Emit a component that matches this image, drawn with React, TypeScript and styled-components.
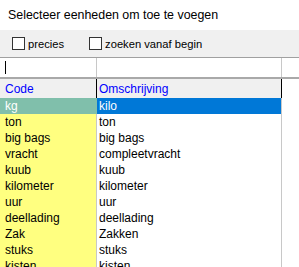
import React from 'react';
import styled, {createGlobalStyle} from "styled-components";

const GlobalStyle = createGlobalStyle`
  body {
    margin: 0;
    background: #ffffff;
    font-family: "Liberation Sans", Arial, sans-serif;
  }
`

const Page = styled.div`
  width: 299px;
  height: 267px;
  overflow: hidden;
`

const Title = styled.div`
  height: 30px;
  padding-left: 8px;
  font-size: 12.4px;
  line-height: 30px;
  color: #000;
`

const Toolbar = styled.div`
  height: 27px;
  background: #f0f0f0;
  border-bottom: 1px solid #a0a0a0;
  display: flex;
  align-items: center;
  padding-left: 12px;
  gap: 25px;
`

const Check = styled.label`
  display: flex;
  align-items: center;
  gap: 3px;
  font-size: 11.2px;
  color: #000;
`

const Box = styled.span`
  width: 11px;
  height: 11px;
  border: 1px solid #333;
  background: #fff;
`

const Grid = styled.div`
  display: grid;
  grid-template-columns: 96px 1px 184px 1px 1fr;
`

const FilterRow = styled(Grid)`
  height: 19px;
  border-bottom: 2px solid #a9a9a9;
`

const Line = styled.div<{$color: string}>`
  background: ${p => p.$color};
`

const FilterCell = styled.div`
  position: relative;
`

const Caret = styled.span`
  position: absolute;
  left: 5px;
  top: 3px;
  width: 1px;
  height: 13px;
  background: #000;
`

const HeaderRow = styled(Grid)`
  height: 19px;
`

const HeadCell = styled.div<{$pad: number}>`
  background: #f0f0f0;
  color: #0000ff;
  font-size: 12px;
  line-height: 20px;
  padding-left: ${p => p.$pad}px;
`

const Row = styled(Grid)`
  height: 16px;
  font-size: 12px;
  line-height: 16px;
`

const CodeCell = styled.div<{$selected?: boolean}>`
  background: ${p => p.$selected ? "#80bfab" : "#ffff80"};
  color: ${p => p.$selected ? "#fff" : "#000"};
  padding-left: 5px;
  white-space: nowrap;
`

const DescCell = styled.div<{$selected?: boolean}>`
  background: ${p => p.$selected ? "#0078d7" : "#fff"};
  color: ${p => p.$selected ? "#fff" : "#000"};
  padding-left: 2px;
  white-space: nowrap;
`

const units: [string, string][] = [
    ["kg", "kilo"],
    ["ton", "ton"],
    ["big bags", "big bags"],
    ["vracht", "compleetvracht"],
    ["kuub", "kuub"],
    ["kilometer", "kilometer"],
    ["uur", "uur"],
    ["deellading", "deellading"],
    ["Zak", "Zakken"],
    ["stuks", "stuks"],
    ["kisten", "kisten"],
]

export default function App() {
    return (
        <>
            <GlobalStyle/>
            <Page>
                <Title>Selecteer eenheden om toe te voegen</Title>
                <Toolbar>
                    <Check><Box/>precies</Check>
                    <Check><Box/>zoeken vanaf begin</Check>
                </Toolbar>
                <FilterRow>
                    <FilterCell><Caret/></FilterCell>
                    <Line $color="#c8c8c8"/>
                    <div/>
                    <Line $color="#c8c8c8"/>
                    <div/>
                </FilterRow>
                <HeaderRow>
                    <HeadCell $pad={5}>Code</HeadCell>
                    <Line $color="#000"/>
                    <HeadCell $pad={2}>Omschrijving</HeadCell>
                    <Line $color="#000"/>
                    <div/>
                </HeaderRow>
                {units.map(([code, desc], i) => (
                    <Row key={code}>
                        <CodeCell $selected={i === 0}>{code}</CodeCell>
                        <Line $color={i === 0 ? "#80bfab" : "#c8c8c8"}/>
                        <DescCell $selected={i === 0}>{desc}</DescCell>
                        <Line $color="#c8c8c8"/>
                        <div/>
                    </Row>
                ))}
            </Page>
        </>
    )
}
